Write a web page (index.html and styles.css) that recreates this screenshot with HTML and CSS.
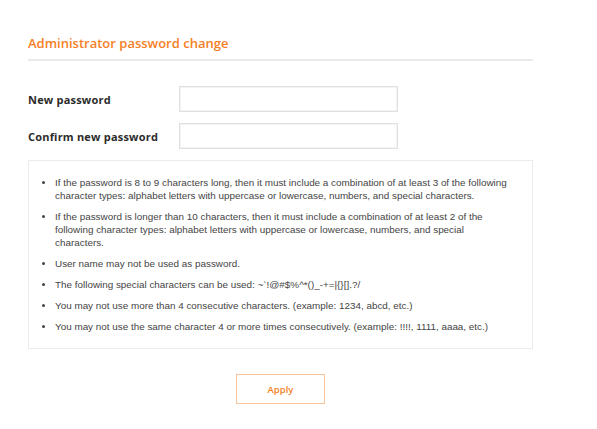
FILE: index.html
```html
<!DOCTYPE html>
<html>

<head>
    <title>Administrator password change</title>
    <meta charset="utf-8">
    <link rel="stylesheet" href="styles.css">
</head>

<body>
    <section class="container">
        <h1 class="title">Administrator password change</h1>

        <form class="pw-form">
            <div class="row">
                <label for="newPw">New password</label>
                <input id="newPw" type="password">
            </div>
            <div class="row">
                <label for="confirmPw">Confirm new password</label>
                <input id="confirmPw" type="password">
            </div>

            <!-- Règles du mot de passe -->
            <div class="notes">
                <ul>
                    <li>If the password is 8 to 9 characters long, then it must include a combination of at least 3 of the following character types: alphabet letters with uppercase or lowercase, numbers, and special characters.</li>
                    <li>If the password is longer than 10 characters, then it must include a combination of at least 2 of the following character types: alphabet letters with uppercase or lowercase, numbers, and special characters.</li>
                    <li>User name may not be used as password.</li>
                    <li>The following special characters can be used: ~`!@#$%^*()_-+=|{}[].?/</li>
                    <li>You may not use more than 4 consecutive characters. (example: 1234, abcd, etc.)</li>
                    <li>You may not use the same character 4 or more times consecutively. (example: !!!!, 1111, aaaa, etc.)</li>
                </ul>
            </div>

            <div class="actions">
                <button type="button" class="apply">Apply</button>
            </div>
        </form>
    </section>
</body>

</html>
```

FILE: styles.css
```css
body {
    margin: 0;
    background-color: #fff;
    color: #333;
    font-family: "Open Sans", Arial, sans-serif;
}

.container {
    width: 505px;
    padding: 34px 0 0 28px;
}

.title {
    margin: 0;
    padding-bottom: 7px;
    font-size: 13px;
    font-weight: 600;
    line-height: 18px;
    color: #f58026;
    border-bottom: 2px solid #e9e9e9;
}

.pw-form {
    margin-top: 25px;
}

.row {
    display: flex;
    align-items: center;
    margin-bottom: 11px;
}

.row label {
    width: 151px;
    font-size: 11px;
    font-weight: 700;
    letter-spacing: 0.2px;
    color: #2b2b2b;
}

.row input {
    width: 219px;
    height: 26px;
    box-sizing: border-box;
    border: 1px solid #e0e0e0;
    box-shadow: inset 0 0 0 1px #f3f3f3;
    padding: 0 6px;
}

.notes {
    margin-top: 6px;
    border: 1px solid #ebebeb;
    padding: 15px 20px 15px 13px;
    font-family: "Liberation Sans", Arial, sans-serif;
    font-size: 9.9px;
    line-height: 13px;
    color: #444;
}

.notes ul {
    margin: 0;
    padding-left: 13px;
}

.notes li {
    margin-bottom: 8px;
}

.notes li:last-child {
    margin-bottom: 0;
}

.actions {
    display: flex;
    justify-content: center;
    margin-top: 25px;
}

.apply {
    width: 89px;
    height: 30px;
    background-color: #fff;
    border: 1px solid #f9c39b;
    color: #f58026;
    font-family: "Open Sans", Arial, sans-serif;
    font-size: 9.5px;
    font-weight: 600;
    cursor: pointer;
}
```
